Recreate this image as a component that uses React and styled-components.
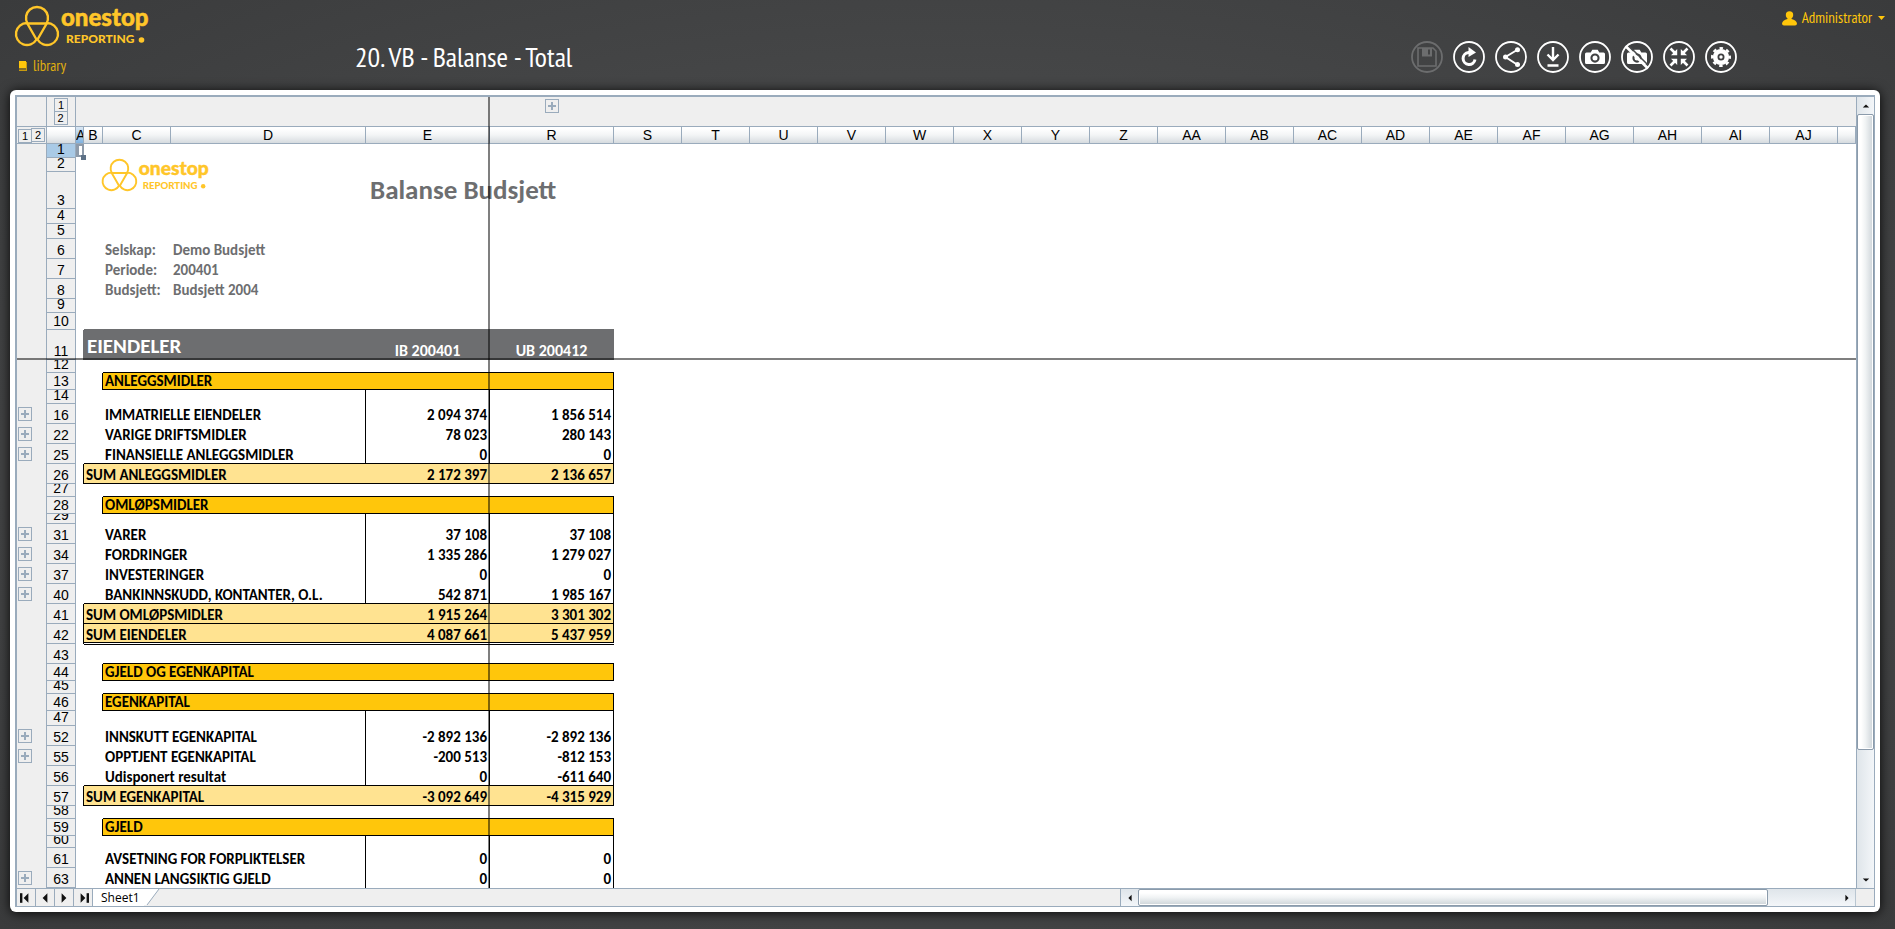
import styled, { createGlobalStyle } from "styled-components";

const GlobalStyle = createGlobalStyle`
  * {
    box-sizing: border-box;
  }

  body {
    margin: 0;
    background: #444546;
  }

  button {
    margin: 0;
    padding: 0;
    border: none;
    background: none;
    cursor: pointer;
  }
`;

const Page = styled.div`
  display: flex;
  flex-direction: column;
  height: 100vh;
  padding: 0 15px 17px 10px;
  background: radial-gradient(ellipse at center, #555657 0%, #3a3b3c 100%);
  font-family: "PT Sans Narrow", "Open Sans", sans-serif;
`;

const Header = styled.header`
  display: grid;
  grid-template-columns: 345px 1fr auto;
  flex: none;
  height: 90px;
`;

const Brand = styled.div`
  display: flex;
  flex-direction: column;
  align-items: flex-start;
  gap: 8px;
  padding: 5px 0 0 4px;

  svg {
    display: block;
  }
`;

const LibraryLink = styled.a`
  display: flex;
  align-items: center;
  gap: 6px;
  padding-left: 5px;
  color: #e0b010;
  font-size: 15px;
  line-height: 22px;
  text-decoration: none;
`;

const PageTitle = styled.h1`
  margin: 0;
  padding-top: 39px;
  color: #fff;
  font-size: 28px;
  line-height: 36px;
  font-weight: 400;
`;

const Actions = styled.div`
  display: flex;
  flex-direction: column;
  align-items: flex-end;
  gap: 13px;
  padding-top: 8px;
`;

const UserMenu = styled.button`
  display: flex;
  align-items: center;
  gap: 5px;
  color: #ffc60b;
  font-family: inherit;
  font-size: 15px;
  line-height: 20px;
  margin-right: -5px;
`;

const Toolbar = styled.div`
  display: flex;
  gap: 10px;
  margin-right: 143px;
`;

const ToolButton = styled.button`
  width: 32px;
  height: 32px;
  color: ${(props) => (props.disabled ? '#6c6d6e' : '#fff')};

  svg {
    display: block;
  }
`;

const Panel = styled.main`
  display: flex;
  flex: 1;
  min-height: 0;
  padding: 5px;
  background: #fff;
  border-radius: 6px;
  box-shadow: 0 1px 12px rgba(0, 0, 0, 0.9);
`;

const Frame = styled.div`
  display: flex;
  flex-direction: column;
  flex: 1;
  min-width: 0;
  border: solid #9aabbc;
  border-width: 2px 1px 1px 2px;
  background: #efefef;
`;

const SheetArea = styled.div`
  display: flex;
  flex: 1;
  min-height: 0;
`;

const Viewport = styled.div`
  position: relative;
  flex: 1;
  min-width: 0;
  overflow: hidden;
  background: #fff;
`;

const Sheet = styled.table`
  width: 100%;
  table-layout: fixed;
  border-collapse: separate;
  border-spacing: 0;
  font-family: Carlito, Lato, sans-serif;
  font-size: 15px;
  line-height: 16px;
`;

const Line = styled.tr`
  height: ${(props) => props.$h}px;
`;

const OutlineCell = styled.td`
  padding: 0 0 0 1px;
  background: #efefef;
  box-shadow: inset -1px 0 #9aabbc${(props) => props.$line && ', inset 0 -1px #9aabbc'};
`;

const ColumnOutline = styled.td`
  padding: 0;
  background: #efefef;
  border-bottom: 1px solid #9aabbc;
  border-right: ${(props) => (props.$line ? '1px solid #9aabbc' : 'none')};
`;

const ColumnHead = styled.th`
  padding: 0;
  overflow: hidden;
  background: ${(props) => (props.$active
    ? 'linear-gradient(#dce9f5, #7fb2e0)'
    : 'linear-gradient(#fff 10%, #f3f5f6 50%, #d6dbdf 100%)')};
  border-right: 1px solid #9aabbc;
  border-bottom: 1px solid #9aabbc;
  font: 400 14px/16px "Liberation Sans", Arial, sans-serif;
  text-align: center;
`;

const RowHead = styled.th`
  padding: 0;
  background: ${(props) => (props.$active ? '#a9cae6' : '#efefef')};
  border-right: 1px solid #9aabbc;
  border-bottom: 1px solid #9aabbc;
  font: 400 14px/16px "Liberation Sans", Arial, sans-serif;
`;

const RowNumber = styled.div`
  display: flex;
  align-items: flex-end;
  justify-content: center;
  height: ${(props) => props.$h - 1}px;
  overflow: hidden;
`;

const fills = {
  section: '#ffc60b',
  sum: '#ffe391',
  head: '#6d6e70',
};

const cellLines = ({ $bottom, $right, $top, $double }) => {
  const lines = [];
  if ($double) lines.push('inset 0 -1px #fff', 'inset 0 -2px #000');
  else if ($bottom) lines.push(`inset 0 -1px ${$bottom}`);
  if ($top) lines.push('inset 0 1px #000');
  if ($right) lines.push(`inset -1px 0 ${$right}`);
  return lines.length ? lines.join(', ') : 'none';
};

const Cell = styled.td`
  padding: 0 3px 1px 2px;
  white-space: nowrap;
  vertical-align: ${(props) => props.$valign || 'bottom'};
  font-weight: 700;
  text-align: ${(props) => props.$align || 'left'};
  color: ${(props) => props.$color || '#000'};
  background: ${(props) => fills[props.$fill] || '#fff'};
  box-shadow: ${cellLines};
`;

const ReportTitle = styled(Cell)`
  padding-left: 4px;
  font-size: 27px;
  line-height: 32px;
  vertical-align: middle;
`;

const BandTitle = styled(Cell)`
  padding-left: 3px;
  font-size: 21px;
  line-height: 26px;
`;

const BandCell = styled(Cell)`
  font-size: 16px;
`;

const Anchor = styled.div`
  position: relative;
`;

const Level = styled.button`
  width: 14px;
  height: 14px;
  border: 1px solid #9aabbc;
  font: 400 11px/12px "Liberation Sans", Arial, sans-serif;
  text-align: center;

  & + & {
    ${(props) => (props.$stacked ? 'margin-top: -1px;' : 'margin-left: -1px;')}
  }
`;

const LevelGroup = styled.div`
  display: flex;
  flex-direction: ${(props) => (props.$stacked ? 'column' : 'row')};
  align-items: center;
`;

const ExpandButton = styled.button`
  display: block;
  width: 14px;
  height: 14px;
  border: 1px solid #9aabbc;
  margin: ${(props) => (props.$column ? '0 auto 12px' : '0')};

  svg {
    display: block;
  }
`;

const Picture = styled.div`
  position: absolute;
  left: -4px;
  top: 0;
  z-index: 1;
`;

const Selection = styled.div`
  position: absolute;
  top: 0;
  left: -2px;
  width: 8px;
  height: 13px;
  border: solid #8e9baa;
  border-width: 2px 2px 2px 3px;
  z-index: 1;

  &::after {
    content: "";
    position: absolute;
    right: -4px;
    bottom: -5px;
    width: 5px;
    height: 5px;
    background: #5d7186;
  }
`;

const FreezeColumn = styled.div`
  position: absolute;
  left: 471px;
  top: 0;
  bottom: 0;
  width: 2px;
  background: rgba(0, 0, 0, 0.5);
`;

const FreezeRow = styled.div`
  position: absolute;
  left: 0;
  right: 0;
  top: 261px;
  height: 2px;
  background: rgba(0, 0, 0, 0.5);
`;

const ScrollBar = styled.div`
  display: flex;
  flex-direction: ${(props) => (props.$vertical ? 'column' : 'row')};
  ${(props) => (props.$vertical ? 'width: 18px;' : 'width: 40%;')}
  border-left: 1px solid #9aabbc;
  ${(props) => !props.$vertical && 'border-right: 1px solid #b9c6d1; margin-left: auto;'}
  background: linear-gradient(${(props) => (props.$vertical ? '90deg' : '180deg')}, #dfe5ea, #f3f6f9);
`;

const ScrollArrow = styled.button`
  display: flex;
  align-items: center;
  justify-content: center;
  flex: 0 0 17px;
`;

const ScrollTrack = styled.div`
  display: flex;
  flex-direction: ${(props) => (props.$vertical ? 'column' : 'row')};
  flex: 1;
`;

const ScrollThumb = styled.div`
  flex: 0 0 ${(props) => (props.$vertical ? '84%' : '90%')};
  border: 1px solid #8b9bab;
  border-radius: 2px;
  box-shadow: inset 0 0 0 1px #fff;
  background: linear-gradient(${(props) => (props.$vertical ? '90deg' : '180deg')}, #fff 20%, #f0f3f4 50%, #cdd4d9 100%);
`;

const Footer = styled.footer`
  display: flex;
  flex: none;
  height: 18px;
  padding-right: 18px;
  border-top: 1px solid #9aabbc;
`;

const NavButton = styled.button`
  display: flex;
  align-items: center;
  justify-content: center;
  width: 19px;
  border-right: 1px solid #9aabbc;
`;

const Tab = styled.button`
  display: flex;
  height: 17px;
  font: 400 12px/17px "Open Sans", sans-serif;

  span {
    padding: 0 4px 0 8px;
    background: #fff;
  }
`;

const columns = ['S', 'T', 'U', 'V', 'W', 'X', 'Y', 'Z', 'AA', 'AB', 'AC', 'AD', 'AE', 'AF', 'AG', 'AH', 'AI', 'AJ'];
const widths = [30, 29, 8, 19, 68, 195, 124, 124, ...columns.map(() => 68)];

const rows = [
  { n: 1, h: 14 },
  { n: 2, h: 14, logo: true },
  { n: 3, h: 37, title: 'Balanse Budsjett' },
  { n: 4, h: 15 },
  { n: 5, h: 15 },
  { n: 6, h: 20, info: ['Selskap:', 'Demo Budsjett'] },
  { n: 7, h: 20, info: ['Periode:', '200401'] },
  { n: 8, h: 20, info: ['Budsjett:', 'Budsjett 2004'] },
  { n: 9, h: 14 },
  { n: 10, h: 17 },
  { n: 11, h: 30, type: 'head', label: 'EIENDELER', e: 'IB 200401', r: 'UB 200412' },
  { n: 12, h: 13 },
  { n: 13, h: 17, type: 'section', label: 'ANLEGGSMIDLER' },
  { n: 14, h: 14, type: 'body' },
  { n: 16, h: 20, type: 'body', plus: true, label: 'IMMATRIELLE EIENDELER', e: '2 094 374', r: '1 856 514' },
  { n: 22, h: 20, type: 'body', plus: true, label: 'VARIGE DRIFTSMIDLER', e: '78 023', r: '280 143' },
  { n: 25, h: 20, type: 'body', plus: true, label: 'FINANSIELLE ANLEGGSMIDLER', e: '0', r: '0' },
  { n: 26, h: 20, type: 'sum', label: 'SUM ANLEGGSMIDLER', e: '2 172 397', r: '2 136 657' },
  { n: 27, h: 13 },
  { n: 28, h: 17, type: 'section', label: 'OMLØPSMIDLER' },
  { n: 29, h: 10, type: 'body' },
  { n: 31, h: 20, type: 'body', plus: true, label: 'VARER', e: '37 108', r: '37 108' },
  { n: 34, h: 20, type: 'body', plus: true, label: 'FORDRINGER', e: '1 335 286', r: '1 279 027' },
  { n: 37, h: 20, type: 'body', plus: true, label: 'INVESTERINGER', e: '0', r: '0' },
  { n: 40, h: 20, type: 'body', plus: true, label: 'BANKINNSKUDD, KONTANTER, O.L.', e: '542 871', r: '1 985 167' },
  { n: 41, h: 20, type: 'sum', label: 'SUM OMLØPSMIDLER', e: '1 915 264', r: '3 301 302' },
  { n: 42, h: 20, type: 'sum', double: true, label: 'SUM EIENDELER', e: '4 087 661', r: '5 437 959' },
  { n: 43, h: 20 },
  { n: 44, h: 17, type: 'section', label: 'GJELD OG EGENKAPITAL' },
  { n: 45, h: 13 },
  { n: 46, h: 17, type: 'section', label: 'EGENKAPITAL' },
  { n: 47, h: 15, type: 'body' },
  { n: 52, h: 20, type: 'body', plus: true, label: 'INNSKUTT EGENKAPITAL', e: '-2 892 136', r: '-2 892 136' },
  { n: 55, h: 20, type: 'body', plus: true, label: 'OPPTJENT EGENKAPITAL', e: '-200 513', r: '-812 153' },
  { n: 56, h: 20, type: 'body', label: 'Udisponert resultat', e: '0', r: '-611 640' },
  { n: 57, h: 20, type: 'sum', label: 'SUM EGENKAPITAL', e: '-3 092 649', r: '-4 315 929' },
  { n: 58, h: 13 },
  { n: 59, h: 17, type: 'section', label: 'GJELD' },
  { n: 60, h: 12, type: 'body' },
  { n: 61, h: 20, type: 'body', label: 'AVSETNING FOR FORPLIKTELSER', e: '0', r: '0' },
  { n: 63, h: 20, type: 'body', plus: true, label: 'ANNEN LANGSIKTIG GJELD', e: '0', r: '0' },
];

const Logo = ({ width, height }) => (
  <svg width={width} height={height} viewBox="0 0 136 42" fill="#ffc629" role="img" aria-label="onestop reporting">
    <g fill="none" stroke="#ffc629" strokeWidth="2.4" strokeLinejoin="round">
      <path d="M13.5 18.5A11 11 0 1 1 32.5 18.5Z" />
      <path d="M22.5 34.5A11 11 0 1 1 13 18Z" />
      <path d="M33 18A11 11 0 1 1 23.5 34.5Z" />
    </g>
    <text x="47" y="21" fontFamily="Lato, sans-serif" fontWeight="900" fontSize="24" stroke="#ffc629" strokeWidth="0.5" strokeLinejoin="round">onestop</text>
    <text x="52" y="38" fontFamily="Lato, sans-serif" fontWeight="900" fontSize="12">REPORTING</text>
    <circle cx="127.5" cy="35" r="2.8" />
  </svg>
);

const Camera = () => (
  <path
    fill="currentColor"
    fillRule="evenodd"
    d="M7.5 11.5h4.2l1.6-2.8h5.4l1.6 2.8h4.2q1.5 0 1.5 1.5v8.5q0 1.5-1.5 1.5h-17q-1.5 0-1.5-1.5v-8.5q0-1.5 1.5-1.5zM16 12.5a4.6 4.6 0 1 0 0 9.2a4.6 4.6 0 1 0 0-9.2zM16 14.6a2.5 2.5 0 1 1 0 5a2.5 2.5 0 1 1 0-5z"
  />
);

const tools = [
  {
    name: 'Save',
    disabled: true,
    icon: (
      <>
        <path d="M7 7h15l3 3v15H7z" fill="none" stroke="currentColor" strokeWidth="1.6" />
        <path d="M11 7h10v8.5H11zM17 8.5v5h2v-5z" fill="currentColor" fillRule="evenodd" />
      </>
    ),
  },
  {
    name: 'Refresh',
    icon: (
      <>
        <path d="M17 11.5h-1.5a6 6 0 1 0 6.5 7" fill="none" stroke="currentColor" strokeWidth="3" />
        <path d="M15.5 6l7.5 5.5l-7.5 4.5z" fill="currentColor" />
      </>
    ),
  },
  {
    name: 'Share',
    icon: (
      <>
        <path d="M22 9L10.5 16L22 23.5" fill="none" stroke="currentColor" strokeWidth="2" />
        <circle cx="22.5" cy="8.8" r="2.5" fill="currentColor" />
        <circle cx="10.5" cy="16" r="2.5" fill="currentColor" />
        <circle cx="22.5" cy="23.5" r="2.5" fill="currentColor" />
      </>
    ),
  },
  {
    name: 'Download',
    icon: (
      <path d="M16 6v13M10.5 13.5l5.5 5.5l5.5-5.5M10.5 24.5h11" fill="none" stroke="currentColor" strokeWidth="2.4" />
    ),
  },
  { name: 'Snapshot', icon: <Camera /> },
  {
    name: 'Remove snapshot',
    icon: (
      <>
        <Camera />
        <path d="M8 5L27 24" stroke="#474849" strokeWidth="1.6" />
        <path d="M4.5 5L27 27.5" stroke="currentColor" strokeWidth="2.6" />
      </>
    ),
  },
  {
    name: 'Collapse',
    icon: (
      <>
        <path d="M7.5 7.5l5 5M24.5 7.5l-5 5M7.5 24.5l5-5M24.5 24.5l-5-5" stroke="currentColor" strokeWidth="2.6" />
        <path d="M14.2 8v6.2H8zM17.8 8v6.2H24zM14.2 24v-6.2H8zM17.8 24v-6.2H24z" fill="currentColor" />
      </>
    ),
  },
  {
    name: 'Settings',
    icon: (
      <>
        <circle cx="16" cy="16" r="5.8" fill="none" stroke="currentColor" strokeWidth="4.6" />
        <circle cx="16" cy="16" r="8.8" fill="none" stroke="currentColor" strokeWidth="2.4" strokeDasharray="3.5 3.41" strokeDashoffset="1.75" />
        <circle cx="16" cy="16" r="1.7" fill="currentColor" />
      </>
    ),
  },
];

const Plus = () => (
  <svg width="12" height="12" viewBox="0 0 12 12">
    <path d="M2 6h8M6 2v8" stroke="#9aabbc" strokeWidth="2" />
  </svg>
);

const arrows = {
  up: 'M1 7L5 3L9 7z',
  down: 'M1 3L5 7L9 3z',
  left: 'M7 1L3 5L7 9z',
  right: 'M3 1L7 5L3 9z',
};

const Arrow = ({ to, size = 10, bar }) => (
  <svg width={size} height={size} viewBox="0 0 10 10" fill="#111">
    <path d={arrows[to]} />
    {bar !== undefined && <path d={`M${bar} 1h2v8h-2z`} />}
  </svg>
);

const SheetRow = ({ row, next }) => {
  const { n, h, type, label, e, r, info, title, logo, plus, double } = row;
  const sum = type === 'sum';
  const section = type === 'section';
  const head = type === 'head';
  const body = type === 'body';
  const wide = sum || head;
  const afterDouble = n === 43;
  const black = '#000';

  // lines sit on the right and bottom edge of a cell, so the row above draws the top one
  let bottom;
  if (sum || section || next?.type === 'sum' || next?.type === 'section') bottom = black;
  if (next?.type === 'head') bottom = fills.head;
  const bottomB = next?.type === 'sum' || next?.type === 'head' ? bottom : undefined;
  const edge = { $bottom: bottom, $fill: type, $double: double, $top: afterDouble };
  const side = body || section || sum ? black : undefined;
  const color = head ? '#fff' : undefined;
  const Label = head ? BandTitle : Cell;
  const Value = head ? BandCell : Cell;

  return (
    <Line $h={h}>
      <OutlineCell>
        {plus && <ExpandButton aria-label={`Expand row ${n}`}><Plus /></ExpandButton>}
      </OutlineCell>
      <RowHead scope="row" $active={n === 1}>
        <RowNumber $h={h}>{n}</RowNumber>
      </RowHead>
      <Cell $valign="top" $right={sum ? black : head ? fills.head : undefined}>
        {n === 1 && <Anchor><Selection /></Anchor>}
      </Cell>
      {!wide && <Cell $right={section ? black : undefined} $bottom={bottomB} $top={afterDouble} />}
      {info ? (
        <>
          <Cell $color="#6d6e70">{info[0]}</Cell>
          <Cell $color="#6d6e70">{info[1]}</Cell>
        </>
      ) : (
        <Label
          colSpan={wide ? 3 : 2}
          $color={color}
          $valign={logo ? 'top' : undefined}
          {...edge}
          $right={body ? black : undefined}
        >
          {label}
          {logo && <Anchor><Picture><Logo width={109} height={34} /></Picture></Anchor>}
        </Label>
      )}
      {title ? (
        <ReportTitle colSpan={2} $color="#6d6e70">{title}</ReportTitle>
      ) : (
        <>
          <Value $align={head ? 'center' : 'right'} $color={color} {...edge} $right={body ? black : undefined}>{e}</Value>
          <Value $align={head ? 'center' : 'right'} $color={color} {...edge} $right={side}>{r}</Value>
        </>
      )}
      <Cell colSpan={columns.length + 1} />
    </Line>
  );
};

const Spreadsheet = () => (
  <Viewport>
    <Sheet>
      <colgroup>
        {widths.map((width, index) => (
          <col key={index} width={width} />
        ))}
        <col />
      </colgroup>
      <thead>
        <Line $h={30}>
          <OutlineCell $line />
          <ColumnOutline $line>
            <LevelGroup $stacked>
              <Level $stacked>1</Level>
              <Level $stacked>2</Level>
            </LevelGroup>
          </ColumnOutline>
          <ColumnOutline colSpan={5} />
          <ColumnOutline>
            <ExpandButton $column aria-label="Expand columns"><Plus /></ExpandButton>
          </ColumnOutline>
          <ColumnOutline colSpan={columns.length + 1} />
        </Line>
        <Line $h={17}>
          <OutlineCell $line>
            <LevelGroup>
              <Level>1</Level>
              <Level>2</Level>
            </LevelGroup>
          </OutlineCell>
          <ColumnHead />
          {['A', 'B', 'C', 'D', 'E', 'R', ...columns].map((name) => (
            <ColumnHead key={name} scope="col" $active={name === 'A'}>{name}</ColumnHead>
          ))}
          <ColumnHead />
        </Line>
      </thead>
      <tbody>
        {rows.map((row, index) => (
          <SheetRow key={row.n} row={row} next={rows[index + 1]} />
        ))}
      </tbody>
    </Sheet>
    <FreezeColumn />
    <FreezeRow />
  </Viewport>
);

export default function App() {
  return (
    <Page>
      <GlobalStyle />
      <Header>
        <Brand>
          <Logo width={136} height={42} />
          <LibraryLink href="#library">
            <svg width="8" height="10" viewBox="0 0 8 10">
              <path d="M0 0h7v7H0z" fill="#ffc60b" />
              <path d="M0 8h7.5M7.5 1v9M0 9.5h7.5" stroke="#c79a10" fill="none" />
            </svg>
            library
          </LibraryLink>
        </Brand>
        <PageTitle>20. VB - Balanse - Total</PageTitle>
        <Actions>
          <UserMenu>
            <svg width="15" height="15" viewBox="0 0 15 15" fill="currentColor">
              <circle cx="7.5" cy="4" r="3.7" />
              <path d="M5.5 6h4v2q5 1 5.5 4.5q0 2-2 2h-11q-2 0-2-2q.5-3.5 5.5-4.5z" />
            </svg>
            Administrator
            <svg width="8" height="5" viewBox="0 0 8 5" fill="currentColor">
              <path d="M1 0h7L4.5 4z" />
            </svg>
          </UserMenu>
          <Toolbar>
            {tools.map((tool) => (
              <ToolButton key={tool.name} disabled={tool.disabled} aria-label={tool.name}>
                <svg width="32" height="32" viewBox="0 0 32 32">
                  <circle cx="16" cy="16" r="15" fill="none" stroke="currentColor" strokeWidth="1.8" />
                  {tool.icon}
                </svg>
              </ToolButton>
            ))}
          </Toolbar>
        </Actions>
      </Header>
      <Panel>
        <Frame>
          <SheetArea>
            <Spreadsheet />
            <ScrollBar $vertical>
              <ScrollArrow aria-label="Scroll up"><Arrow to="up" size={8} /></ScrollArrow>
              <ScrollTrack $vertical>
                <ScrollThumb $vertical />
              </ScrollTrack>
              <ScrollArrow aria-label="Scroll down"><Arrow to="down" size={8} /></ScrollArrow>
            </ScrollBar>
          </SheetArea>
          <Footer>
            <NavButton aria-label="First sheet"><Arrow to="left" size={12} bar={0} /></NavButton>
            <NavButton aria-label="Previous sheet"><Arrow to="left" size={12} /></NavButton>
            <NavButton aria-label="Next sheet"><Arrow to="right" size={12} /></NavButton>
            <NavButton aria-label="Last sheet"><Arrow to="right" size={12} bar={8} /></NavButton>
            <Tab>
              <span>Sheet1</span>
              <svg width="16" height="17" viewBox="0 0 16 17">
                <path d="M0 0h15L3 16H0z" fill="#fff" />
                <path d="M15 0L3 16" stroke="#9aabbc" />
              </svg>
            </Tab>
            <ScrollBar>
              <ScrollArrow aria-label="Scroll left"><Arrow to="left" size={8} /></ScrollArrow>
              <ScrollTrack>
                <ScrollThumb />
              </ScrollTrack>
              <ScrollArrow aria-label="Scroll right"><Arrow to="right" size={8} /></ScrollArrow>
            </ScrollBar>
          </Footer>
        </Frame>
      </Panel>
    </Page>
  );
}
